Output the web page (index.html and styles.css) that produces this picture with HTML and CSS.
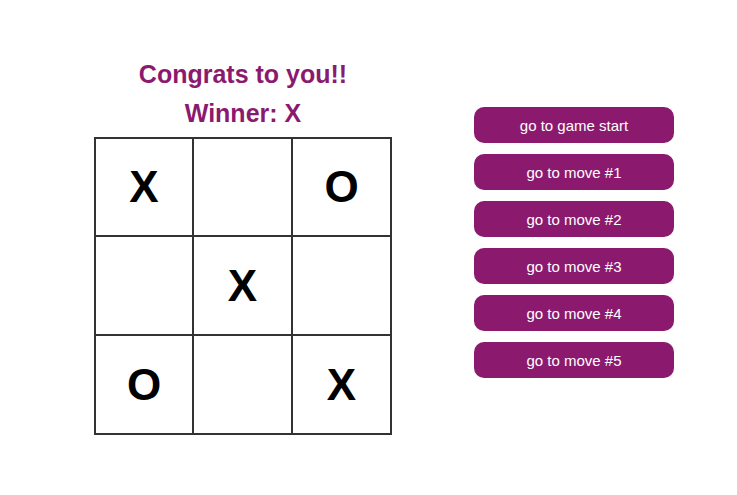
FILE: index.html
```html
<!DOCTYPE html>
<html>
<head>
<meta charset="utf-8">
<link rel="stylesheet" href="styles.css">
</head>
<body>
<div class="game">
  <div class="game-main">
    <h2 class="status">Congrats to you!!</h2>
    <h2 class="status">Winner: X</h2>
    <div class="board">
      <div class="square">X</div>
      <div class="square"></div>
      <div class="square">O</div>
      <div class="square"></div>
      <div class="square">X</div>
      <div class="square"></div>
      <div class="square">O</div>
      <div class="square"></div>
      <div class="square">X</div>
    </div>
  </div>
  <div class="history">
    <button class="move">go to game start</button>
    <button class="move">go to move #1</button>
    <button class="move">go to move #2</button>
    <button class="move">go to move #3</button>
    <button class="move">go to move #4</button>
    <button class="move">go to move #5</button>
  </div>
</div>
</body>
</html>
```
FILE: styles.css
```css
html, body {
  margin: 0;
  padding: 0;
  background: #ffffff;
  font-family: "Liberation Sans", Arial, sans-serif;
}
.game {
  display: flex;
  align-items: flex-start;
  padding: 60px 0 0 94px;
}
.game-main {
  display: flex;
  flex-direction: column;
  align-items: center;
  width: 298px;
}
.status {
  margin: 0 0 10px;
  font-size: 25px;
  line-height: 29px;
  font-weight: bold;
  color: #8b1a6f;
  text-align: center;
  white-space: nowrap;
}
.status + .status {
  margin-bottom: 9px;
}
.board {
  display: grid;
  grid-template-columns: 96px 97px 97px;
  grid-template-rows: 96px 97px 97px;
  gap: 2px;
  padding: 2px;
  background: #333333;
}
.square {
  background: #ffffff;
  display: flex;
  align-items: center;
  justify-content: center;
  font-size: 44px;
  font-weight: bold;
  color: #000000;
}
.history {
  display: flex;
  flex-direction: column;
  gap: 11px;
  margin: 47px 0 0 82px;
}
.move {
  width: 200px;
  height: 36px;
  border: none;
  border-radius: 10px;
  background: #8b1a6f;
  color: #ffffff;
  font-family: "Liberation Sans", Arial, sans-serif;
  font-size: 15px;
  padding: 0;
  cursor: pointer;
}
```
